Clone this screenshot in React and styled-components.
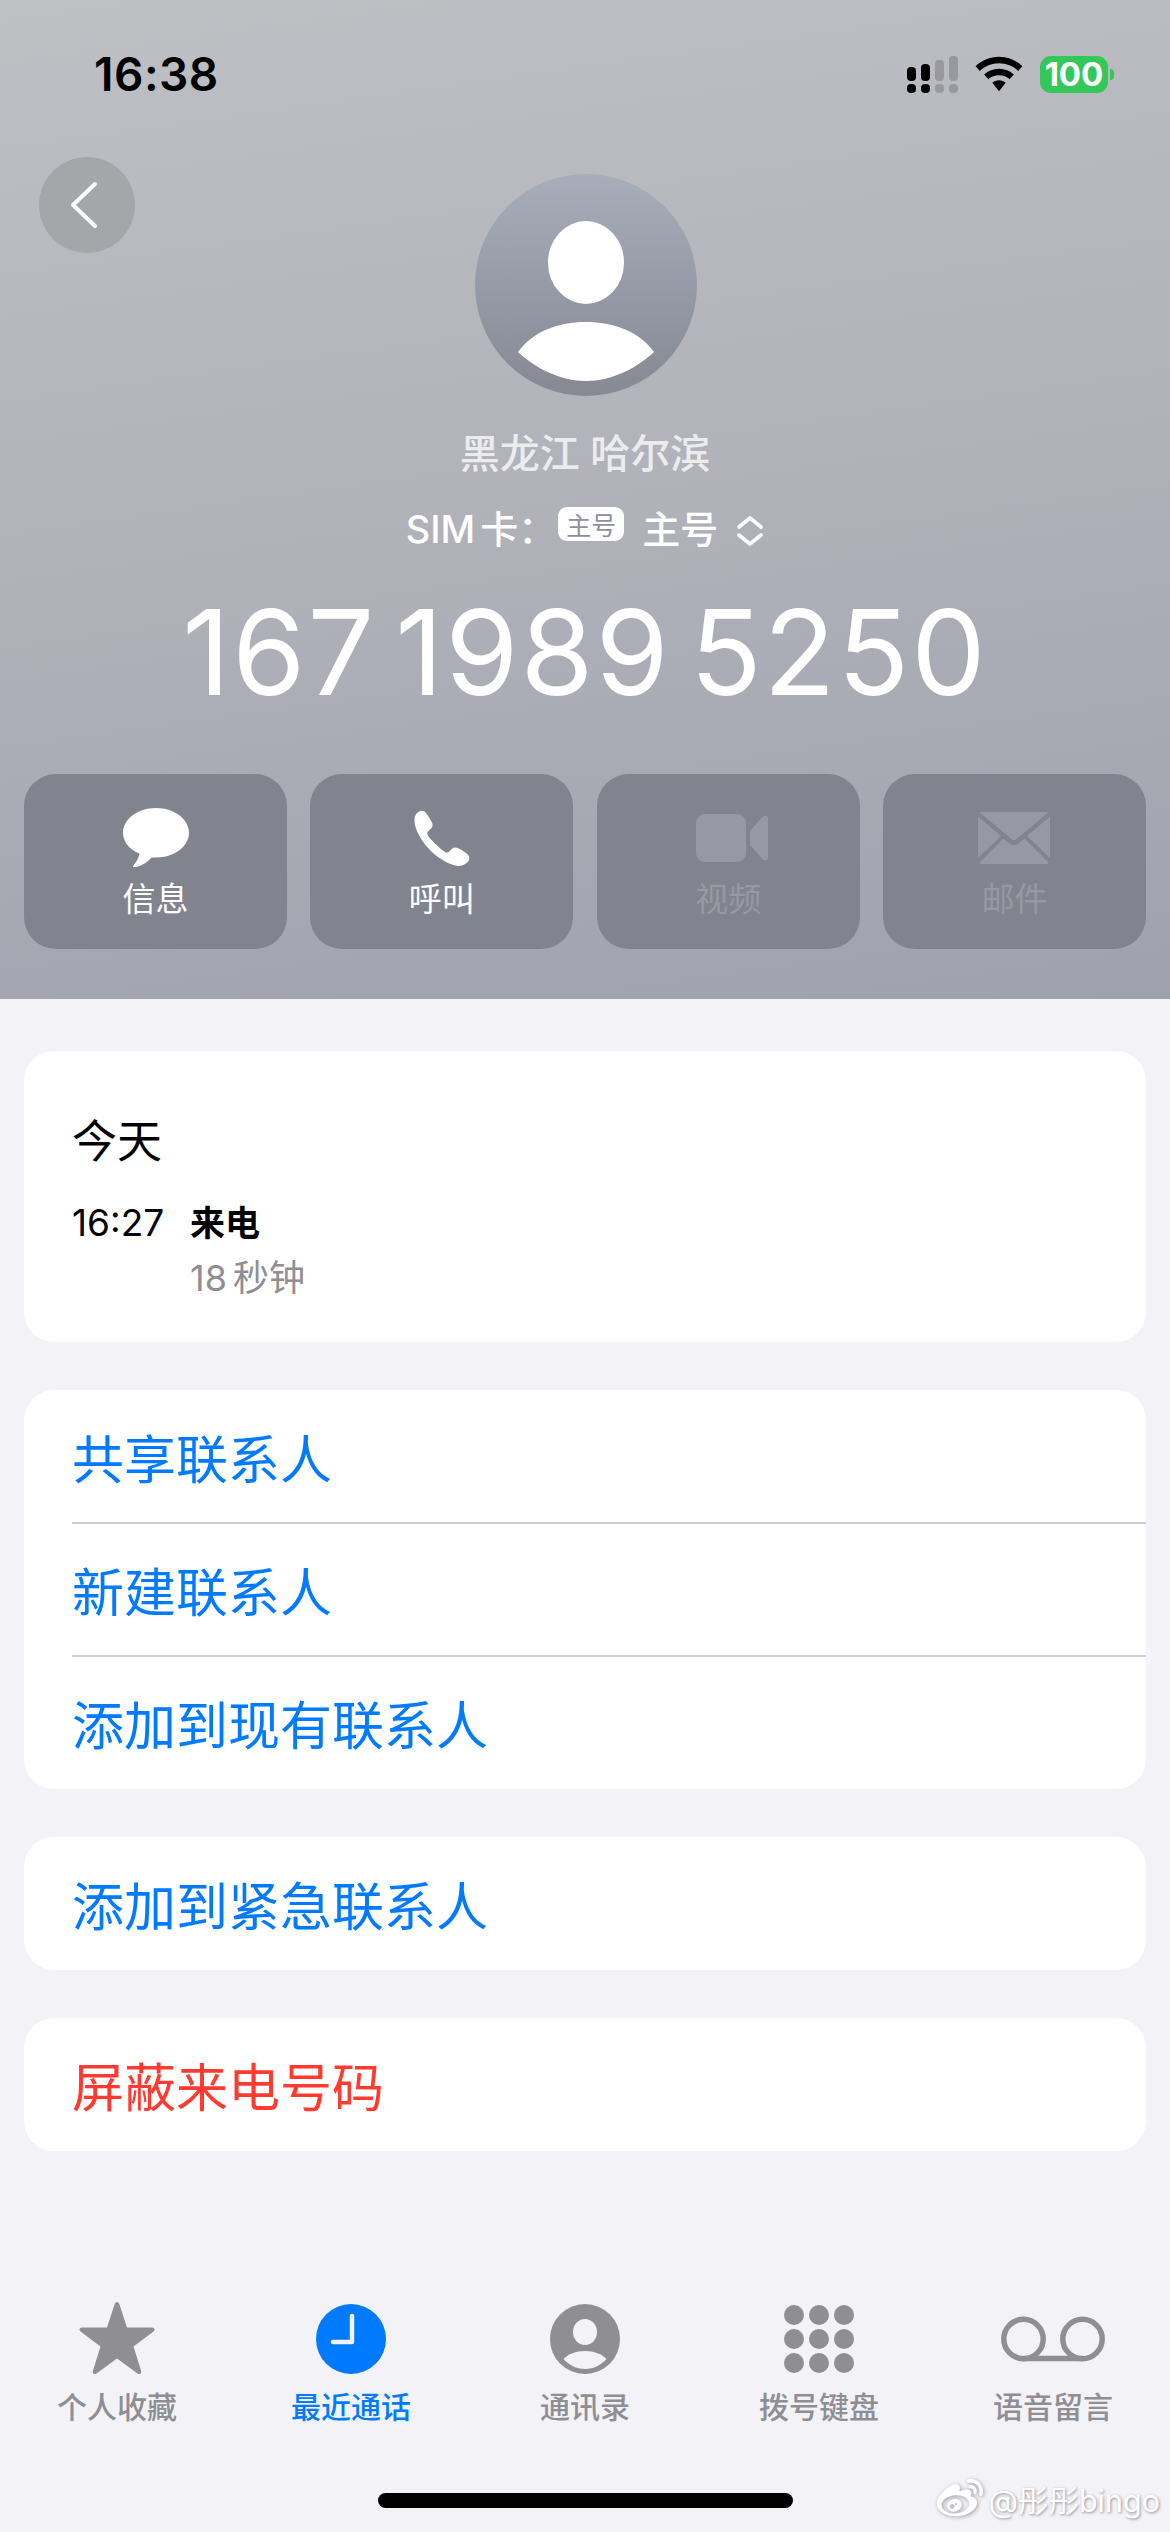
import React from 'react';
import styled, { createGlobalStyle } from 'styled-components';
import { FaWeibo } from 'react-icons/fa';

const GlobalStyle = createGlobalStyle`
  html, body { margin: 0; padding: 0; background: #f2f2f7; }
  body { font-family: Inter, "Noto Sans CJK SC", sans-serif; }
`;

const Page = styled.div`
  position: relative;
  width: 1170px;
  height: 2532px;
  display: flex;
  flex-direction: column;
  background: #f2f2f7;
  overflow: hidden;
`;

const Header = styled.header`
  height: 999px;
  box-sizing: border-box;
  padding: 55px 24px 0;
  display: flex;
  flex-direction: column;
  background: linear-gradient(172deg, #bfc0c4 0%, #b4b5bc 40%, #9fa1ad 100%);
`;

const StatusBar = styled.div`
  height: 38px;
  display: flex;
  align-items: center;
  padding: 0 38px 0 70px;
`;

const Time = styled.div`
  font-size: 46px;
  font-weight: 600;
  letter-spacing: 0.5px;
  color: #000;
  margin-right: auto;
`;

const WifiIcon = styled.svg`
  margin-left: 16px;
`;

const Battery = styled.div`
  position: relative;
  width: 68px;
  height: 37px;
  margin-left: 17px;
  border-radius: 11px;
  background: #34c759;
  color: #fff;
  font-size: 33px;
  font-weight: 700;
  display: flex;
  align-items: center;
  justify-content: center;
  &::after {
    content: '';
    position: absolute;
    right: -6px;
    top: 13px;
    width: 4px;
    height: 11px;
    border-radius: 0 6px 6px 0;
    background: #34c759;
  }
`;

const BackButton = styled.div`
  position: absolute;
  left: 39px;
  top: 157px;
  width: 96px;
  height: 96px;
  border-radius: 50%;
  background: #a5a6aa;
  display: flex;
  align-items: center;
  justify-content: center;
`;

const BackIcon = styled.svg`
  margin-right: 6px;
`;

const Avatar = styled.div`
  align-self: center;
  margin: 81px 0 0 1px;
  width: 222px;
  height: 222px;
  border-radius: 50%;
  overflow: hidden;
  background: linear-gradient(180deg, #a7adba 0%, #868994 100%);
`;

const Place = styled.div`
  margin-top: 30px;
  text-align: center;
  font-size: 40px;
  line-height: 56px;
  font-weight: 500;
  color: #ececef;
`;

const SimRow = styled.div`
  margin-top: 19px;
  height: 50px;
  display: flex;
  align-items: center;
  justify-content: center;
  color: #fff;
  font-size: 38px;
  font-weight: 500;
`;

const SimLabel = styled.span`
  word-spacing: -5px;
`;

const SimBadge = styled.span`
  margin: 0 18px 5px 2px;
  width: 66px;
  height: 34px;
  border-radius: 9px;
  background: #fff;
  color: #8e8f9a;
  font-size: 25px;
  font-weight: 400;
  display: flex;
  align-items: center;
  justify-content: center;
`;

const SimValue = styled.span`
  margin-right: 18px;
`;

const ChevronIcon = styled.svg`
  margin-top: 10px;
`;

const Number = styled.div`
  margin-top: 31px;
  text-align: center;
  color: #fff;
  font-size: 118px;
  line-height: 140px;
  font-weight: 400;
  letter-spacing: 2px;
  word-spacing: -16px;
  white-space: nowrap;
`;

const Actions = styled.div`
  margin-top: 52px;
  display: grid;
  grid-template-columns: repeat(4, 263px);
  justify-content: space-between;
`;

const Action = styled.div`
  height: 175px;
  border-radius: 32px;
  background: #81838f;
  display: flex;
  flex-direction: column;
  align-items: center;
  color: ${p => (p.$off ? '#9798a3' : '#fff')};
`;

const ActionIcon = styled.div`
  height: 88px;
  margin-top: 20px;
  display: flex;
  align-items: center;
  justify-content: center;
`;

const VideoIcon = styled.svg`
  margin-left: 8px;
`;

const ActionLabel = styled.div`
  font-size: 33px;
  line-height: 40px;
  margin-top: -3px;
`;

const Content = styled.main`
  padding: 52px 24px 0;
  display: flex;
  flex-direction: column;
  gap: 48px;
`;

const Card = styled.section`
  background: #fff;
  border-radius: 30px;
  overflow: hidden;
`;

const CallCard = styled(Card)`
  height: 291px;
  box-sizing: border-box;
  padding: 63px 48px 0;
`;

const DayTitle = styled.div`
  font-size: 45px;
  line-height: 56px;
  color: #000;
`;

const CallRow = styled.div`
  margin-top: 28px;
  display: flex;
`;

const CallTime = styled.div`
  width: 118px;
  font-size: 37px;
  line-height: 50px;
  color: #000;
`;

const CallType = styled.div`
  font-size: 35px;
  line-height: 50px;
  font-weight: 600;
  color: #000;
`;

const CallLength = styled.div`
  font-size: 36px;
  line-height: 50px;
  margin-top: 5px;
  word-spacing: -4px;
  color: #8e8e93;
`;

const Row = styled.div`
  height: 133px;
  padding-left: 48px;
  display: flex;
  align-items: center;
  position: relative;
  font-size: 52px;
  color: ${p => (p.$danger ? '#ff3b30' : '#007aff')};
  & + &::before {
    content: '';
    position: absolute;
    top: -1px;
    left: 48px;
    right: 0;
    height: 2px;
    background: #cfcfd2;
  }
`;

const TabBar = styled.nav`
  margin-top: auto;
  height: 232px;
  display: grid;
  grid-template-columns: repeat(5, 234px);
`;

const Tab = styled.div`
  display: flex;
  flex-direction: column;
  align-items: center;
  padding-top: 1px;
  color: ${p => (p.$active ? '#007aff' : '#8e8e93')};
`;

const TabIcon = styled.div`
  height: 76px;
  display: flex;
  align-items: center;
  justify-content: center;
`;

const TabLabel = styled.div`
  margin-top: 10px;
  font-size: 30px;
  line-height: 40px;
  font-weight: 500;
`;

const HomeBar = styled.div`
  position: absolute;
  left: 378px;
  bottom: 24px;
  width: 415px;
  height: 15px;
  border-radius: 8px;
  background: #000;
`;

const Watermark = styled.div`
  position: absolute;
  right: 10px;
  bottom: 10px;
  display: flex;
  align-items: center;
  gap: 5px;
  color: #fff;
  font-size: 30.5px;
  text-shadow: 1px 1px 3px rgba(0, 0, 0, 0.4);
  svg { filter: drop-shadow(1px 1px 2px rgba(0, 0, 0, 0.35)); }
`;

const Signal = () => (
  <svg width="52" height="37" viewBox="0 0 52 37">
    <g fill="#000">
      <rect x="0" y="11" width="9" height="14" rx="4" />
      <rect x="14" y="8" width="9" height="17" rx="4" />
      <rect x="0" y="28" width="9" height="9" rx="4" />
      <rect x="14" y="28" width="9" height="9" rx="4" />
    </g>
    <g fill="#98989e">
      <rect x="28" y="4" width="9" height="21" rx="4" />
      <rect x="42" y="0" width="9" height="25" rx="4" />
      <rect x="28" y="28" width="9" height="9" rx="4" />
      <rect x="42" y="28" width="9" height="9" rx="4" />
    </g>
  </svg>
);

const Wifi = () => (
  <WifiIcon width="48" height="36" viewBox="0 0 50 36">
    <path fill="#000" d="M25 0C15.500 0 7 3.800 .6 9.800L5 14.800C10.200 9.800 17.200 6.800 25 6.800S39.800 9.800 45 14.800L49.400 9.800C43 3.800 34.500 0 25 0Z" />
    <path fill="#000" d="M25 12.500C19 12.500 13.600 14.800 9.500 18.500L13.900 23.400C16.800 20.900 20.700 19.300 25 19.300S33.200 20.900 36.100 23.400L40.500 18.500C36.400 14.800 31 12.500 25 12.500Z" />
    <path fill="#000" d="M25 24.500C22.300 24.500 19.900 25.500 18 27.200L25 36L32 27.200C30.100 25.500 27.700 24.500 25 24.500Z" />
  </WifiIcon>
);

const Chevron = () => (
  <ChevronIcon width="28" height="30" viewBox="0 0 28 30">
    <path d="M3 11L14 2L25 11M3 19L14 28L25 19" fill="none" stroke="#fff" strokeWidth="3.600" strokeLinecap="round" strokeLinejoin="round" />
  </ChevronIcon>
);

const Person = () => (
  <svg width="222" height="222" viewBox="0 0 222 222">
    <ellipse cx="111" cy="88.500" rx="38" ry="41.500" fill="#fff" />
    <path d="M43 178C58 157 84 148 111 148S164 157 179 178C162 194 137 207 111 207S60 194 43 178Z" fill="#fff" />
  </svg>
);

const Bubble = () => (
  <svg width="66" height="62" viewBox="0 0 68 62">
    <path fill="currentColor" d="M34 0C15 0 0 11.500 0 25.500C0 35 7 43 17 47C16.500 51 14 55.500 10.500 59.500C10 60.500 10.500 61.500 12 61C19 60 25 56 29.500 51C31 51.100 32.500 51 34 51C53 51 68 39.500 68 25.500S53 0 34 0Z" />
  </svg>
);

const Phone = () => (
  <svg width="56" height="56" viewBox="0 0 56 56">
    <path fill="currentColor" d="M3 3C5 .8 8 -.2 10.500 1.500C12.500 3 16.500 9.500 18 12.500C19 15 18.500 17 17 18.500L14 21.500C13 22.500 13.200 24 14 25.500C16 29 27 40 31 42C32.500 42.800 34 42.800 35 41.800L38 38.800C39.500 37.300 41.500 37 44 38C47 39.500 52.500 43 54 44.800C56 47.300 55.500 50 53.500 52.300C50.500 55.300 46.500 56.500 42.500 55.800C33 54 22 46.500 15.500 39.500C8.500 32.500 2.500 22.500 .8 14C0 10 .5 5.500 3 3Z" />
  </svg>
);

const Video = () => (
  <VideoIcon width="72" height="48" viewBox="0 0 72 48">
    <rect x="0" y="0" width="50" height="48" rx="9" fill="currentColor" />
    <path fill="currentColor" d="M54 17L67 2.500C68.500 1 72 2 72 4V44C72 46 68.500 47 67 45.500L54 31Z" />
  </VideoIcon>
);

const Mail = () => (
  <svg width="72" height="52" viewBox="0 0 72 52">
    <path fill="currentColor" d="M3 0H69C69.500 0 70 .8 69.500 1.300L38.500 27C37 28.300 35 28.300 33.500 27L2.500 1.300C2 .8 2.500 0 3 0Z" />
    <path fill="currentColor" d="M0 4.500L23 24L0 46ZM72 4.500L49 24L72 46ZM25.500 26.500L31.500 31.500C34 33.500 38 33.500 40.500 31.500L46.500 26.500L70 50C70.500 51 70 52 69 52H3C2 52 1.500 51 2 50Z" />
  </svg>
);

const Star = () => (
  <svg width="76" height="74" viewBox="0 0 76 74">
    <path fill="currentColor" d="M38 0C39 0 39.800 .8 40.300 2L48 25.500H73C75.500 25.500 76.500 28 74.500 29.500L54.500 44.500L62 68.500C63 71.300 60.500 73 58.500 71.500L38 56.500L17.500 71.500C15.500 73 13 71.300 14 68.500L21.500 44.500L1.500 29.500C-.5 28 .5 25.500 3 25.500H28L35.700 2C36.200 .8 37 0 38 0Z" />
  </svg>
);

const Clock = () => (
  <svg width="70" height="70" viewBox="0 0 70 70">
    <circle cx="35" cy="35" r="35" fill="currentColor" />
    <path d="M36 12V38H17" fill="none" stroke="#f2f2f7" strokeWidth="4.500" strokeLinecap="round" strokeLinejoin="round" />
  </svg>
);

const Contact = () => (
  <svg width="70" height="70" viewBox="0 0 70 70">
    <circle cx="35" cy="35" r="35" fill="currentColor" />
    <ellipse cx="35" cy="28" rx="12" ry="13" fill="#f2f2f7" />
    <path d="M13.500 55C18 50 26 47 35 47S52 50 56.500 55C51 61 44 65 35 65S19 61 13.500 55Z" fill="#f2f2f7" />
  </svg>
);

const Keypad = () => (
  <svg width="70" height="68" viewBox="0 0 70 68">
    <g fill="currentColor">
      {[10, 34, 58].map(y =>
        [10, 35, 60].map(x => <circle key={`${x}-${y}`} cx={x} cy={y} r="10" />)
      )}
    </g>
  </svg>
);

const Voicemail = () => (
  <svg width="104" height="46" viewBox="0 0 104 46">
    <path fill="none" stroke="currentColor" strokeWidth="5.500" d="M22 42.500H82" />
    <circle cx="22.500" cy="23" r="19.700" fill="none" stroke="currentColor" strokeWidth="5.500" />
    <circle cx="81.500" cy="23" r="19.700" fill="none" stroke="currentColor" strokeWidth="5.500" />
  </svg>
);

const tabs = [
  { label: '个人收藏', icon: <Star /> },
  { label: '最近通话', icon: <Clock />, active: true },
  { label: '通讯录', icon: <Contact /> },
  { label: '拨号键盘', icon: <Keypad /> },
  { label: '语音留言', icon: <Voicemail /> },
];

const actions = [
  { label: '信息', icon: <Bubble /> },
  { label: '呼叫', icon: <Phone /> },
  { label: '视频', icon: <Video />, off: true },
  { label: '邮件', icon: <Mail />, off: true },
];

export default function App() {
  return (
    <Page>
      <GlobalStyle />
      <Header>
        <StatusBar>
          <Time>16:38</Time>
          <Signal />
          <Wifi />
          <Battery>100</Battery>
        </StatusBar>
        <BackButton>
          <BackIcon width="30" height="50" viewBox="0 0 30 50">
            <path d="M26 4L4 25L26 46" fill="none" stroke="#fff" strokeWidth="4" strokeLinecap="round" strokeLinejoin="round" />
          </BackIcon>
        </BackButton>
        <Avatar><Person /></Avatar>
        <Place>黑龙江 哈尔滨</Place>
        <SimRow>
          <SimLabel>SIM 卡：</SimLabel>
          <SimBadge>主号</SimBadge>
          <SimValue>主号</SimValue>
          <Chevron />
        </SimRow>
        <Number>167 1989 5250</Number>
        <Actions>
          {actions.map(a => (
            <Action key={a.label} $off={a.off}>
              <ActionIcon>{a.icon}</ActionIcon>
              <ActionLabel>{a.label}</ActionLabel>
            </Action>
          ))}
        </Actions>
      </Header>
      <Content>
        <CallCard>
          <DayTitle>今天</DayTitle>
          <CallRow>
            <CallTime>16:27</CallTime>
            <div>
              <CallType>来电</CallType>
              <CallLength>18 秒钟</CallLength>
            </div>
          </CallRow>
        </CallCard>
        <Card>
          <Row>共享联系人</Row>
          <Row>新建联系人</Row>
          <Row>添加到现有联系人</Row>
        </Card>
        <Card>
          <Row>添加到紧急联系人</Row>
        </Card>
        <Card>
          <Row $danger>屏蔽来电号码</Row>
        </Card>
      </Content>
      <TabBar>
        {tabs.map(t => (
          <Tab key={t.label} $active={t.active}>
            <TabIcon>{t.icon}</TabIcon>
            <TabLabel>{t.label}</TabLabel>
          </Tab>
        ))}
      </TabBar>
      <HomeBar />
      <Watermark>
        <FaWeibo size={46} />
        @彤彤bingo
      </Watermark>
    </Page>
  );
}
